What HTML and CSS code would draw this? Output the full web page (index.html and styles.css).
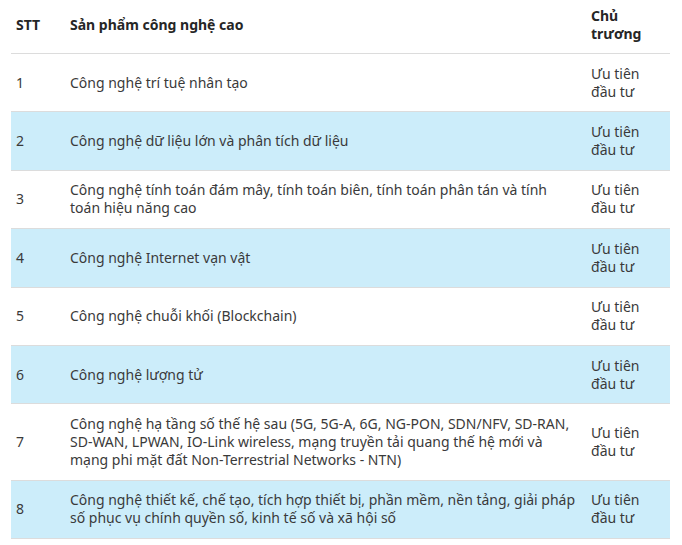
FILE: index.html
```html
<!DOCTYPE html>
<html lang="vi">
<head>
<meta charset="utf-8">
<link rel="stylesheet" href="styles.css">
</head>
<body>
<table class="tbl">
  <colgroup>
    <col class="c1"><col class="c2"><col class="c3">
  </colgroup>
  <thead>
    <tr><th>STT</th><th>Sản phẩm công nghệ cao</th><th>Chủ trương</th></tr>
  </thead>
  <tbody>
    <tr><td>1</td><td>Công nghệ trí tuệ nhân tạo</td><td>Ưu tiên đầu tư</td></tr>
    <tr class="alt"><td>2</td><td>Công nghệ dữ liệu lớn và phân tích dữ liệu</td><td>Ưu tiên đầu tư</td></tr>
    <tr><td>3</td><td>Công nghệ tính toán đám mây, tính toán biên, tính toán phân tán và tính toán hiệu năng cao</td><td>Ưu tiên đầu tư</td></tr>
    <tr class="alt"><td>4</td><td>Công nghệ Internet vạn vật</td><td>Ưu tiên đầu tư</td></tr>
    <tr><td>5</td><td>Công nghệ chuỗi khối (Blockchain)</td><td>Ưu tiên đầu tư</td></tr>
    <tr class="alt"><td>6</td><td>Công nghệ lượng tử</td><td>Ưu tiên đầu tư</td></tr>
    <tr><td>7</td><td>Công nghệ hạ tầng số thế hệ sau (5G, 5G-A, 6G, NG-PON, SDN/NFV, SD-RAN, SD-WAN, LPWAN, IO-Link wireless, mạng truyền tải quang thế hệ mới và mạng phi mặt đất Non-Terrestrial Networks - NTN)</td><td>Ưu tiên đầu tư</td></tr>
    <tr class="alt"><td>8</td><td>Công nghệ thiết kế, chế tạo, tích hợp thiết bị, phần mềm, nền tảng, giải pháp số phục vụ chính quyền số, kinh tế số và xã hội số</td><td>Ưu tiên đầu tư</td></tr>
  </tbody>
</table>
</body>
</html>
```
FILE: styles.css
```css
html, body {
  margin: 0;
  padding: 0;
  background: #ffffff;
}
body {
  padding: 0 12px 0 11px;
  font-family: "Noto Sans", "Liberation Sans", sans-serif;
  font-size: 14px;
  line-height: 18px;
  color: #3a3a3a;
}
.tbl {
  width: 659px;
  border-collapse: collapse;
  table-layout: fixed;
}
.c1 { width: 54px; }
.c2 { width: 521px; }
.c3 { width: 84px; }
.tbl th {
  text-align: left;
  font-weight: 700;
  color: #262626;
  padding: 7px 5px 10px 5px;
  vertical-align: middle;
  border-bottom: 1px solid #dcdcdc;
}
.tbl td {
  padding: 10.7px 5px 10.7px 5px;
  vertical-align: middle;
  border-bottom: 1px solid #dcdcdc;
}
.tbl td.wide, .tbl td:nth-child(2) {
  padding-right: 10px;
}
.tbl tr.alt td {
  background: #ccedfa;
}
```
